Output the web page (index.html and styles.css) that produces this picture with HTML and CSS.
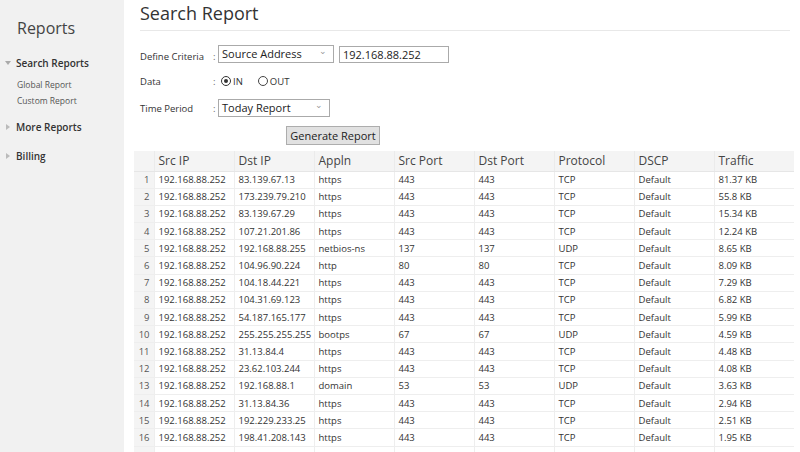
FILE: index.html
```html
<!DOCTYPE html>
<html>
<head>
<meta charset="utf-8">
<link rel="stylesheet" href="styles.css">
</head>
<body>
<div class="page">
  <aside class="sidebar">
    <div class="side-title">Reports</div>
    <div class="nav-group open">
      <div class="nav-head"><span class="tri down"></span>Search Reports</div>
      <div class="nav-sub">Global Report</div>
      <div class="nav-sub">Custom Report</div>
    </div>
    <div class="nav-group">
      <div class="nav-head"><span class="tri right"></span>More Reports</div>
    </div>
    <div class="nav-group">
      <div class="nav-head"><span class="tri right"></span>Billing</div>
    </div>
  </aside>
  <main class="main">
    <h1 class="title">Search Report</h1>
    <div class="form">
      <div class="frow r1">
        <span class="lbl">Define Criteria</span><span class="colon">:</span>
        <div class="sel w1">Source Address<span class="chev">&#8964;</span></div>
        <div class="inp">192.168.88.252</div>
      </div>
      <div class="frow r2">
        <span class="lbl">Data</span><span class="colon">:</span>
        <span class="radio on"></span><span class="rlab">IN</span>
        <span class="radio off"></span><span class="rlab">OUT</span>
      </div>
      <div class="frow r3">
        <span class="lbl">Time Period</span><span class="colon">:</span>
        <div class="sel w2">Today Report<span class="chev">&#8964;</span></div>
      </div>
      <div class="brow"><div class="btn">Generate Report</div></div>
    </div>
    <table class="grid">
      <thead>
        <tr><th class="num"></th><th>Src IP</th><th>Dst IP</th><th>Appln</th><th>Src Port</th><th>Dst Port</th><th>Protocol</th><th>DSCP</th><th>Traffic</th></tr>
      </thead>
      <tbody>
        <tr><td class="num">1</td><td>192.168.88.252</td><td>83.139.67.13</td><td>https</td><td>443</td><td>443</td><td>TCP</td><td>Default</td><td>81.37 KB</td></tr>
        <tr><td class="num">2</td><td>192.168.88.252</td><td>173.239.79.210</td><td>https</td><td>443</td><td>443</td><td>TCP</td><td>Default</td><td>55.8 KB</td></tr>
        <tr><td class="num">3</td><td>192.168.88.252</td><td>83.139.67.29</td><td>https</td><td>443</td><td>443</td><td>TCP</td><td>Default</td><td>15.34 KB</td></tr>
        <tr><td class="num">4</td><td>192.168.88.252</td><td>107.21.201.86</td><td>https</td><td>443</td><td>443</td><td>TCP</td><td>Default</td><td>12.24 KB</td></tr>
        <tr><td class="num">5</td><td>192.168.88.252</td><td>192.168.88.255</td><td>netbios-ns</td><td>137</td><td>137</td><td>UDP</td><td>Default</td><td>8.65 KB</td></tr>
        <tr><td class="num">6</td><td>192.168.88.252</td><td>104.96.90.224</td><td>http</td><td>80</td><td>80</td><td>TCP</td><td>Default</td><td>8.09 KB</td></tr>
        <tr><td class="num">7</td><td>192.168.88.252</td><td>104.18.44.221</td><td>https</td><td>443</td><td>443</td><td>TCP</td><td>Default</td><td>7.29 KB</td></tr>
        <tr><td class="num">8</td><td>192.168.88.252</td><td>104.31.69.123</td><td>https</td><td>443</td><td>443</td><td>TCP</td><td>Default</td><td>6.82 KB</td></tr>
        <tr><td class="num">9</td><td>192.168.88.252</td><td>54.187.165.177</td><td>https</td><td>443</td><td>443</td><td>TCP</td><td>Default</td><td>5.99 KB</td></tr>
        <tr><td class="num">10</td><td>192.168.88.252</td><td>255.255.255.255</td><td>bootps</td><td>67</td><td>67</td><td>UDP</td><td>Default</td><td>4.59 KB</td></tr>
        <tr><td class="num">11</td><td>192.168.88.252</td><td>31.13.84.4</td><td>https</td><td>443</td><td>443</td><td>TCP</td><td>Default</td><td>4.48 KB</td></tr>
        <tr><td class="num">12</td><td>192.168.88.252</td><td>23.62.103.244</td><td>https</td><td>443</td><td>443</td><td>TCP</td><td>Default</td><td>4.08 KB</td></tr>
        <tr><td class="num">13</td><td>192.168.88.252</td><td>192.168.88.1</td><td>domain</td><td>53</td><td>53</td><td>UDP</td><td>Default</td><td>3.63 KB</td></tr>
        <tr><td class="num">14</td><td>192.168.88.252</td><td>31.13.84.36</td><td>https</td><td>443</td><td>443</td><td>TCP</td><td>Default</td><td>2.94 KB</td></tr>
        <tr><td class="num">15</td><td>192.168.88.252</td><td>192.229.233.25</td><td>https</td><td>443</td><td>443</td><td>TCP</td><td>Default</td><td>2.51 KB</td></tr>
        <tr><td class="num">16</td><td>192.168.88.252</td><td>198.41.208.143</td><td>https</td><td>443</td><td>443</td><td>TCP</td><td>Default</td><td>1.95 KB</td></tr>
        <tr><td class="num"></td><td></td><td></td><td></td><td></td><td></td><td></td><td></td><td></td></tr>
      </tbody>
    </table>
  </main>
</div>
</body>
</html>
```
FILE: styles.css
```css
* { box-sizing: border-box; }
html, body { margin: 0; padding: 0; background: #fff; overflow: hidden; }
body { font-family: "Open Sans", "Noto Sans", sans-serif; color: #333; width: 800px; height: 452px; }
.page { display: flex; height: 452px; }
.sidebar { width: 124px; flex: none; background: #f1f1f1; padding-top: 18px; }
.side-title { font-size: 16px; color: #444; padding-left: 17px; line-height: 20px; margin-bottom: 18px; }
.nav-group { margin-bottom: 15px; }
.nav-group.open { margin-bottom: 11px; }
.nav-head { font-size: 10px; font-weight: 600; color: #333; line-height: 14px; display: flex; align-items: center; padding-left: 5px; }
.tri { width: 0; height: 0; display: inline-block; margin-right: 6px; }
.tri.down { border-left: 3px solid transparent; border-right: 3px solid transparent; border-top: 4px solid #aaa; margin-left: 0; margin-right: 5px; }
.tri.right { border-top: 3px solid transparent; border-bottom: 3px solid transparent; border-left: 4px solid #bbb; margin-left: 1px; margin-right: 6px; }
.nav-sub { font-size: 8.5px; color: #555; padding-left: 17px; line-height: 16px; }
.nav-group.open .nav-head { margin-bottom: 7px; }
.main { flex: 1; padding: 2px 0 0 10px; }
.title { font-size: 18px; font-weight: 400; color: #333; margin: 0 0 0 6px; line-height: 22px; padding-bottom: 6px; border-bottom: 1px solid #e8e8e8; width: 650px; }
.form { padding-left: 6px; padding-top: 14px; }
.frow { display: flex; align-items: center; font-size: 9.5px; color: #333; height: 18px; }
.r1 .lbl, .r1 .colon { padding-top: 5px; }
.r2 { margin-top: 9px; }
.r3 { margin-top: 9px; }
.lbl { width: 73px; }
.colon { width: 5px; color: #666; }
.sel { height: 18px; border: 1px solid #aaa; background: #fff; font-size: 11px; line-height: 16px; padding-left: 3px; position: relative; color: #222; }
.sel.w1 { width: 116px; }
.sel.w2 { width: 112px; }
.chev { position: absolute; right: 6px; top: -3px; font-size: 9px; color: #999; }
.inp { margin-left: 5px; width: 110px; height: 17px; border: 1px solid #aaa; font-size: 11px; line-height: 15px; padding-left: 3px; color: #222; }
.radio { width: 10px; height: 10px; border: 1px solid #333; border-radius: 50%; display: inline-block; position: relative; margin-left: 3px; }
.radio.on::after { content: ""; position: absolute; left: 2px; top: 2px; width: 4px; height: 4px; border-radius: 50%; background: #333; }
.radio.off { margin-left: 15px; border-color: #444; }
.rlab { font-size: 9.5px; margin-left: 2px; }
.brow { padding-left: 146px; margin-top: 6px; }
.btn { display: inline-block; width: 94px; height: 19px; border: 1px solid #adadad; background: #e1e1e1; font-size: 11px; line-height: 17px; text-align: center; color: #222; }
.grid { border-collapse: collapse; margin-top: 6px; table-layout: fixed; width: 660px; }
.grid th { font-size: 12px; font-weight: 400; color: #444; text-align: left; height: 20px; padding: 0 0 0 4px; background: #f4f4f4; border-left: 1px solid #ebebeb; border-bottom: 1px solid #e6e6e6; width: 80px; }
.grid td { font-size: 9.5px; color: #333; height: 17.2px; padding: 0 0 0 4px; border-left: 1px solid #eee; border-bottom: 1px solid #eee; white-space: nowrap; overflow: hidden; }
.grid .num { width: 20px; background: #f4f4f4; color: #555; text-align: right; padding: 0 4px 0 0; border-left: none; }
.grid th.num { border-left: none; }
```
